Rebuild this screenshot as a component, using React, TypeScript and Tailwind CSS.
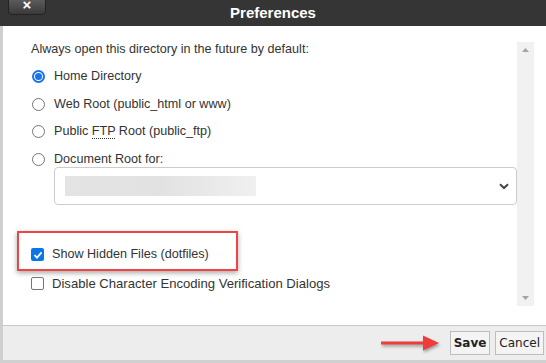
import { useState } from "react";

function Radio({ checked }: { checked?: boolean }) {
  return checked ? (
    <span className="block shrink-0 w-[13px] h-[13px] rounded-full border-2 border-[#1a73e8] flex items-center justify-center">
      <span className="block w-[7px] h-[7px] rounded-full bg-[#1a73e8]" />
    </span>
  ) : (
    <span className="block shrink-0 w-[13px] h-[13px] rounded-full border border-[#767676] bg-white" />
  );
}

function Check({ checked }: { checked?: boolean }) {
  return checked ? (
    <span className="shrink-0 w-[13px] h-[13px] rounded-[2px] bg-[#0b76e8] flex items-center justify-center">
      <svg width="10" height="10" viewBox="0 0 10 10">
        <path d="M1.5 5.2 L4 7.6 L8.6 2.4" fill="none" stroke="white" strokeWidth="1.8" />
      </svg>
    </span>
  ) : (
    <span className="block shrink-0 w-[13px] h-[13px] rounded-[2px] border border-[#767676] bg-white" />
  );
}

export default function App() {
  const [dir] = useState("home");
  const options = [
    { id: "home", label: "Home Directory" },
    { id: "web", label: "Web Root (public_html or www)" },
    { id: "ftp", label: "ftp" },
    { id: "doc", label: "Document Root for:" },
  ];

  return (
    <div className="w-[546px] h-[363px] flex flex-col bg-white text-[#333] font-['Liberation_Sans',Arial,sans-serif] overflow-hidden">
      <div className="h-[26px] bg-[#353535] relative flex items-center justify-center shrink-0">
        <div className="absolute left-[8px] top-[-7px] w-[38px] h-[22px] rounded-[4px] bg-gradient-to-b from-[#6a6a6a] to-[#3a3a3a] border border-[#222] flex items-end justify-center pb-[2px] text-white font-bold text-[15px] leading-none">
          ×
        </div>
        <span className="text-white font-bold text-[15px]">Preferences</span>
      </div>

      <div className="flex-1 flex border-l-[3px] border-[#cfcfcf]">
        <div className="flex-1 pl-[28px] pt-[16px] text-[12.6px]">
          <p className="leading-[15px]">Always open this directory in the future by default:</p>
          <div className="mt-[6px] flex flex-col">
            {options.map((o) => (
              <label key={o.id} className="h-[27.5px] flex items-center gap-[9px]">
                <span className="ml-[1px]">
                  <Radio checked={dir === o.id} />
                </span>
                {o.id === "ftp" ? (
                  <span>
                    Public <span className="border-b border-dotted border-[#333] leading-[13px]">FTP</span> Root (public_ftp)
                  </span>
                ) : (
                  <span>{o.label}</span>
                )}
              </label>
            ))}
          </div>
          <div className="ml-[23px] mt-[-6px] w-[463px] h-[38px] border border-[#ccc] rounded-[4px] flex items-center justify-between pl-[10px] pr-[7px]">
            <div className="w-[191px] h-[20px] bg-gradient-to-r from-[#e4e4e4] via-[#e2e2e2] to-[#f0f0f0]" />
            <svg width="10" height="7" viewBox="0 0 10 7">
              <path d="M1 1.2 L5 5 L9 1.2" fill="none" stroke="#444" strokeWidth="2" />
            </svg>
          </div>

          <div className="mt-[26px] ml-[-14px] w-[221px] h-[40px] border-2 border-[#f04545] shadow-[0_2px_5px_rgba(0,0,0,0.35)] flex items-center gap-[8px] pl-[12px] pt-[7px]">
            <Check checked />
            <span>Show Hidden Files (dotfiles)</span>
          </div>
          <div className="mt-[3px] flex items-center gap-[8px]">
            <Check />
            <span className="text-[13.1px]">Disable Character Encoding Verification Dialogs</span>
          </div>
        </div>
        <div className="w-[17px] mr-[12px] mt-[16px] mb-[19px] bg-[#f1f1f1] flex flex-col items-center justify-between py-[6px]">
          <svg width="7" height="4" viewBox="0 0 7 4"><path d="M0 4 L3.5 0 L7 4 Z" fill="#a3a3a3" /></svg>
          <svg width="7" height="4" viewBox="0 0 7 4"><path d="M0 0 L3.5 4 L7 0 Z" fill="#a3a3a3" /></svg>
        </div>
      </div>

      <div className="h-[38px] shrink-0 bg-[#ededed] border-t border-[#c8c8c8] border-l-[3px] border-l-[#cfcfcf] border-b-[3px] border-b-[#d0d0d0] flex items-center justify-end pr-[2px] gap-[5px] font-['DejaVu_Sans',Tahoma,sans-serif] text-[12px]">
        <svg width="64" height="20" viewBox="0 0 64 20" className="mr-[2px] drop-shadow-[1px_2px_1.5px_rgba(0,0,0,0.35)]">
          <path d="M2 8.5 H44 V2.5 L60 10 L44 17.5 V11.5 H2 Z" fill="#ee3b3b" />
        </svg>
        <button className="h-[24px] px-[3px] bg-[#f4f4f4] border border-[#bdbdbd] font-bold text-[#222]">Save</button>
        <button className="h-[24px] px-[3px] bg-[#f4f4f4] border border-[#bdbdbd] text-[#222]">Cancel</button>
      </div>
    </div>
  );
}
